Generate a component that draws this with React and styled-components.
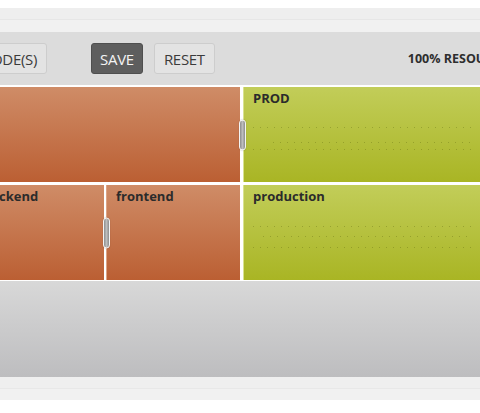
import React from 'react';
import styled, { createGlobalStyle } from 'styled-components';

const GlobalStyle = createGlobalStyle`
    html, body {
        margin: 0;
        padding: 0;
        background: #ffffff;
    }
    body {
        width: 480px;
        overflow: hidden;
        font-family: 'Open Sans', 'Liberation Sans', sans-serif;
    }
`;

const Page = styled.main`
    padding-top: 8px;
    width: 480px;
    overflow: hidden;
`;

const Strip = styled.div`
    height: 24px;
    background: linear-gradient(
        to bottom,
        #eeeeee 0,
        #eeeeee 11px,
        #e6e6e6 11px,
        #e6e6e6 12px,
        #f1f1f1 12px,
        #f1f1f1 100%
    );
`;

const Toolbar = styled.div`
    height: 53px;
    background: #dcdcdc;
    display: flex;
    align-items: center;
    white-space: nowrap;
    margin-left: -64px;
`;

const Button = styled.button`
    height: 31px;
    padding: 0 ${(p) => (p.$primary ? 8 : 9)}px;
    border-radius: 3px;
    font-family: 'Open Sans', 'Liberation Sans', sans-serif;
    font-size: 15px;
    letter-spacing: -0.3px;
    cursor: pointer;
    border: 1px solid ${(p) => (p.$primary ? '#4f4f4f' : '#cdcdcd')};
    background: ${(p) => (p.$primary ? '#5e5e5e' : '#e3e3e3')};
    color: ${(p) => (p.$primary ? '#f4f4f4' : '#3b3b3b')};
    margin-left: ${(p) => p.$gap || 0}px;
`;

const Usage = styled.span`
    margin-left: 193px;
    font-size: 12.5px;
    font-weight: 700;
    color: #2e2e2e;
`;

const Canvas = styled.section`
    background: #ffffff;
    padding: 2px 0 1px;
    margin-left: -27px;
    width: 507px;
    display: flex;
    flex-direction: column;
    gap: 3px;
`;

const Row = styled.div`
    display: flex;
    height: 95px;
`;

const Tile = styled.div`
    position: relative;
    box-sizing: border-box;
    width: ${(p) => (p.$width ? `${p.$width}px` : 'auto')};
    flex: ${(p) => (p.$width ? '0 0 auto' : '1 1 auto')};
    margin-left: ${(p) => p.$gap || 0}px;
    padding: 2px 9px;
    border-left: 1px solid
        ${(p) => (p.$kind === 'prod' ? '#d9e28f' : '#dca385')};
    background: ${(p) =>
        p.$kind === 'prod'
            ? 'linear-gradient(to bottom, #c2cd59 0%, #a9b524 100%)'
            : 'linear-gradient(to bottom, #cf8c67 0%, #bb5f33 100%)'};
`;

const Label = styled.div`
    font-size: 13px;
    line-height: 18px;
    font-weight: 700;
    color: #2b2b2b;
`;

const Dots = styled.div`
    height: 1px;
    margin-top: ${(p) => p.$top}px;
    margin-left: ${(p) => p.$left || 0}px;
    background: repeating-linear-gradient(
        to right,
        rgba(70, 80, 0, 0.28) 0,
        rgba(70, 80, 0, 0.28) 1px,
        transparent 1px,
        transparent 7px
    );
`;

const Handle = styled.span`
    position: absolute;
    top: 50%;
    right: ${(p) => p.$right}px;
    width: 5px;
    height: 29px;
    transform: translateY(-50%);
    border: 1.5px solid #f4f4f4;
    border-radius: 4px;
    background: linear-gradient(to right, #8d8d8d, #bdbdbd 50%, #8d8d8d);
    box-shadow: 0 0 1px rgba(0, 0, 0, 0.35);
    z-index: 2;
`;

const Shelf = styled.div`
    height: 96px;
    background: linear-gradient(to bottom, #d8d8d8 0%, #bdbdbf 100%);
`;

const Footer = styled.div`
    height: 23px;
    background: linear-gradient(
        to bottom,
        #efefef 0,
        #efefef 11px,
        #e8e8e8 11px,
        #e8e8e8 12px,
        #f1f1f1 12px,
        #f1f1f1 100%
    );
`;

const App = () => {
    return (
        <>
            <GlobalStyle />
            <Page>
                <Strip />
                <Toolbar>
                    <Button>ADD NODE(S)</Button>
                    <Button $primary $gap={44}>
                        SAVE
                    </Button>
                    <Button $gap={11}>RESET</Button>
                    <Usage>100% RESOURCES USED</Usage>
                </Toolbar>
                <Canvas>
                    <Row>
                        <Tile $width={267}>
                            <Label>&nbsp;</Label>
                            <Handle $right={-6} />
                        </Tile>
                        <Tile $kind='prod' $gap={3}>
                            <Label>PROD</Label>
                            <Dots $top={20} />
                            <Dots $top={14} $left={20} />
                            <Dots $top={6} />
                        </Tile>
                    </Row>
                    <Row>
                        <Tile $width={131}>
                            <Label>backend</Label>
                            <Handle $right={-6} />
                        </Tile>
                        <Tile $width={134} $gap={2}>
                            <Label>frontend</Label>
                        </Tile>
                        <Tile $kind='prod' $gap={3}>
                            <Label>production</Label>
                            <Dots $top={21} />
                            <Dots $top={9} $left={10} />
                            <Dots $top={10} />
                        </Tile>
                    </Row>
                </Canvas>
                <Shelf />
                <Footer />
            </Page>
        </>
    );
};

export default App;
